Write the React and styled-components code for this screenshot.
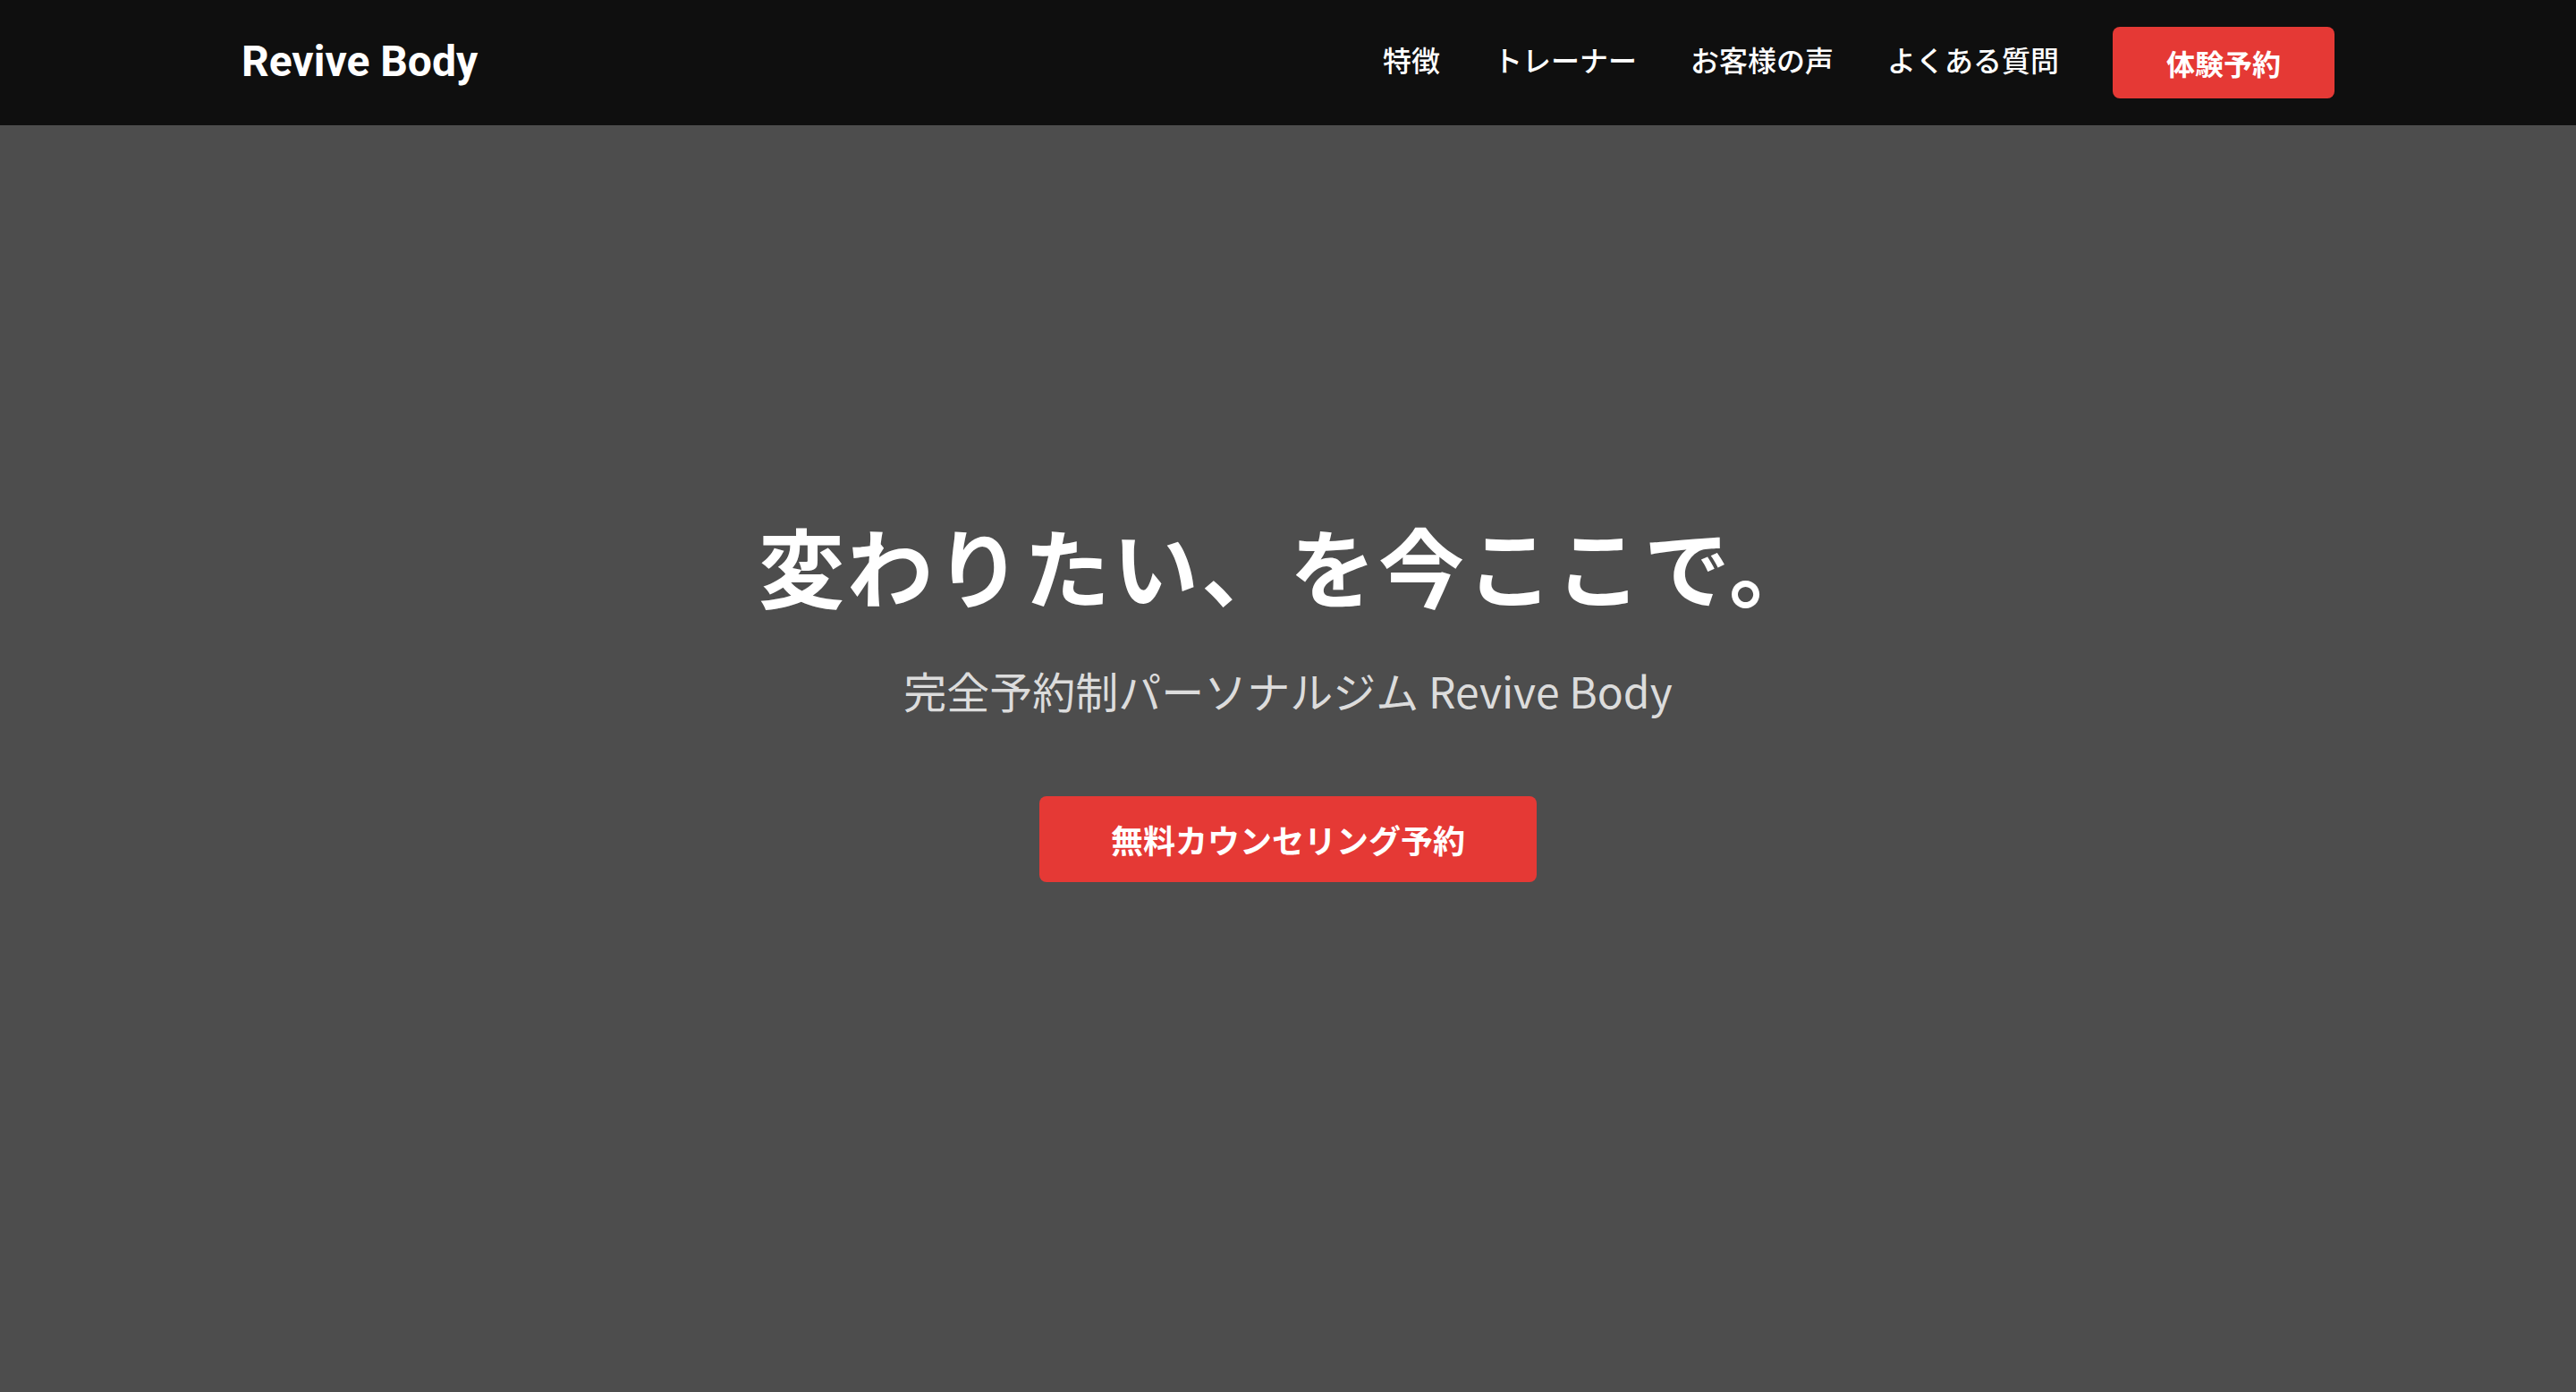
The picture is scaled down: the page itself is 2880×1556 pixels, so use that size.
import styled, { createGlobalStyle } from "styled-components";

const GlobalStyle = createGlobalStyle`
  * {
    box-sizing: border-box;
  }

  html,
  body {
    margin: 0;
    padding: 0;
    background: #4d4d4d;
    font-family: "Noto Sans CJK JP", "Noto Sans", sans-serif;
    color: #fff;
  }
`;

const Header = styled.header`
  height: 140px;
  background: #0f0f0f;
`;

const HeaderInner = styled.div`
  max-width: 2400px;
  height: 100%;
  margin: 0 auto;
  padding: 0 30px;
  display: flex;
  align-items: center;
  justify-content: space-between;
`;

const Logo = styled.a`
  color: #fff;
  font-family: Roboto, "Noto Sans CJK JP", sans-serif;
  font-size: 48px;
  font-weight: 700;
  line-height: 1;
  text-decoration: none;
  margin-bottom: 2px;
`;

const Nav = styled.nav`
  display: flex;
  align-items: center;
  gap: 60px;
`;

const NavLink = styled.a`
  color: #fff;
  font-size: 32px;
  font-weight: 500;
  text-decoration: none;
  line-height: 1;
  margin-bottom: 8px;
`;

const RedButton = styled.a`
  display: inline-flex;
  align-items: center;
  justify-content: center;
  height: ${(p) => p.$height}px;
  padding: 0 ${(p) => p.$padX}px;
  background: #e53935;
  color: #fff;
  font-size: ${(p) => p.$size}px;
  font-weight: 700;
  border-radius: 8px;
  text-decoration: none;
  line-height: 1;
`;

const Hero = styled.section`
  height: calc(100vh - 140px);
  padding-bottom: 146px;
  display: flex;
  flex-direction: column;
  align-items: center;
  justify-content: center;
  text-align: center;
`;

const Title = styled.h1`
  margin: 0 0 34px;
  font-size: 96px;
  font-weight: 700;
  line-height: 1.4;
  letter-spacing: 3px;
  color: #fff;
`;

const Subtitle = styled.p`
  margin: 0 0 80px;
  font-size: 48px;
  font-weight: 400;
  line-height: 1.6;
  color: #dcdcdc;
`;

export default function App() {
  return (
    <>
      <GlobalStyle />
      <Header>
        <HeaderInner>
          <Logo href="#">Revive Body</Logo>
          <Nav>
            <NavLink href="#">特徴</NavLink>
            <NavLink href="#">トレーナー</NavLink>
            <NavLink href="#">お客様の声</NavLink>
            <NavLink href="#">よくある質問</NavLink>
            <RedButton href="#" $height={80} $padX={60} $size={32}>
              体験予約
            </RedButton>
          </Nav>
        </HeaderInner>
      </Header>
      <Hero>
        <Title>変わりたい、を今ここで。</Title>
        <Subtitle>完全予約制パーソナルジム Revive Body</Subtitle>
        <RedButton href="#" $height={96} $padX={80} $size={36}>
          無料カウンセリング予約
        </RedButton>
      </Hero>
    </>
  );
}
